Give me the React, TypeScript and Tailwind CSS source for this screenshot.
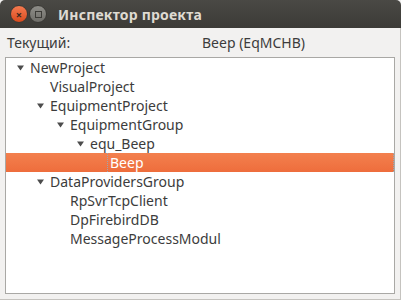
import React from "react";

type Row = { label: string; level: number; expander: boolean; selected?: boolean };

const rows: Row[] = [
  { label: "NewProject", level: 0, expander: true },
  { label: "VisualProject", level: 1, expander: false },
  { label: "EquipmentProject", level: 1, expander: true },
  { label: "EquipmentGroup", level: 2, expander: true },
  { label: "equ_Beep", level: 3, expander: true },
  { label: "Beep", level: 4, expander: false, selected: true },
  { label: "DataProvidersGroup", level: 1, expander: true },
  { label: "RpSvrTcpClient", level: 2, expander: false },
  { label: "DpFirebirdDB", level: 2, expander: false },
  { label: "MessageProcessModul", level: 2, expander: false },
];

const pads = ["pl-[11px]", "pl-[31px]", "pl-[51px]", "pl-[71px]", "pl-[91px]"];

function Tri() {
  return (
    <svg width="7" height="6" viewBox="0 0 7 6" className="block">
      <polygon points="0,0.5 7,0.5 3.5,5.5" fill="#4c4c4c" />
    </svg>
  );
}

export default function App() {
  return (
    <div
      className="w-[401px] h-[300px] bg-[#f2f1f0] flex flex-col overflow-hidden"
      style={{ fontFamily: '"Noto Sans", "DejaVu Sans", sans-serif' }}
    >
      <div className="h-[28px] bg-gradient-to-b from-[#4a4945] to-[#3c3b37] flex items-center shrink-0 rounded-t-[5px]">
        <div className="ml-[10px] w-[18px] h-[18px] rounded-full bg-gradient-to-b from-[#f47a4f] to-[#d84a1c] flex items-center justify-center border border-[#3a3935]">
          <span className="text-[#3a2a20] text-[11px] leading-none font-bold">×</span>
        </div>
        <div className="ml-[1px] w-[18px] h-[18px] rounded-full bg-gradient-to-b from-[#8e8d88] to-[#6f6e69] flex items-center justify-center border border-[#3a3935]">
          <div className="w-[7px] h-[7px] border border-[#3c3b37]" />
        </div>
        <span className="ml-[11px] text-[#dfdbd2] text-[14px] font-bold tracking-[0.2px]">
          Инспектор проекта
        </span>
      </div>
      <div className="flex-1 flex flex-col px-[5px] pb-[5px] border-r border-b border-[#c5c3bf]">
        <div className="h-[29px] flex items-center text-[14px] text-[#3c3c3c]">
          <span className="ml-[2px] w-[195px]">Текущий:</span>
          <span>Beep (EqMCHB)</span>
        </div>
        <div className="flex-1 bg-white border border-[#a9a8a5]">
          {rows.map((r) => (
            <div
              key={r.label}
              className={
                "h-[19px] flex items-center text-[14px] " +
                (r.selected
                  ? "bg-gradient-to-b from-[#f3804e] to-[#ee6d3c] text-white border-r border-dotted border-[#9aa6b2]"
                  : "text-[#3c3c3c]")
              }
            >
              <div className={"flex items-center h-full " + pads[r.level]}>
                <div className="w-[7px] flex justify-center">{r.expander ? <Tri /> : null}</div>
                {r.selected ? (
                  <span className="ml-[3px] h-full flex items-center border-l border-dotted border-[#9aa6b2] pl-[2px]">
                    {r.label}
                  </span>
                ) : (
                  <span className="ml-[6px]">{r.label}</span>
                )}
              </div>
            </div>
          ))}
        </div>
      </div>
    </div>
  );
}
